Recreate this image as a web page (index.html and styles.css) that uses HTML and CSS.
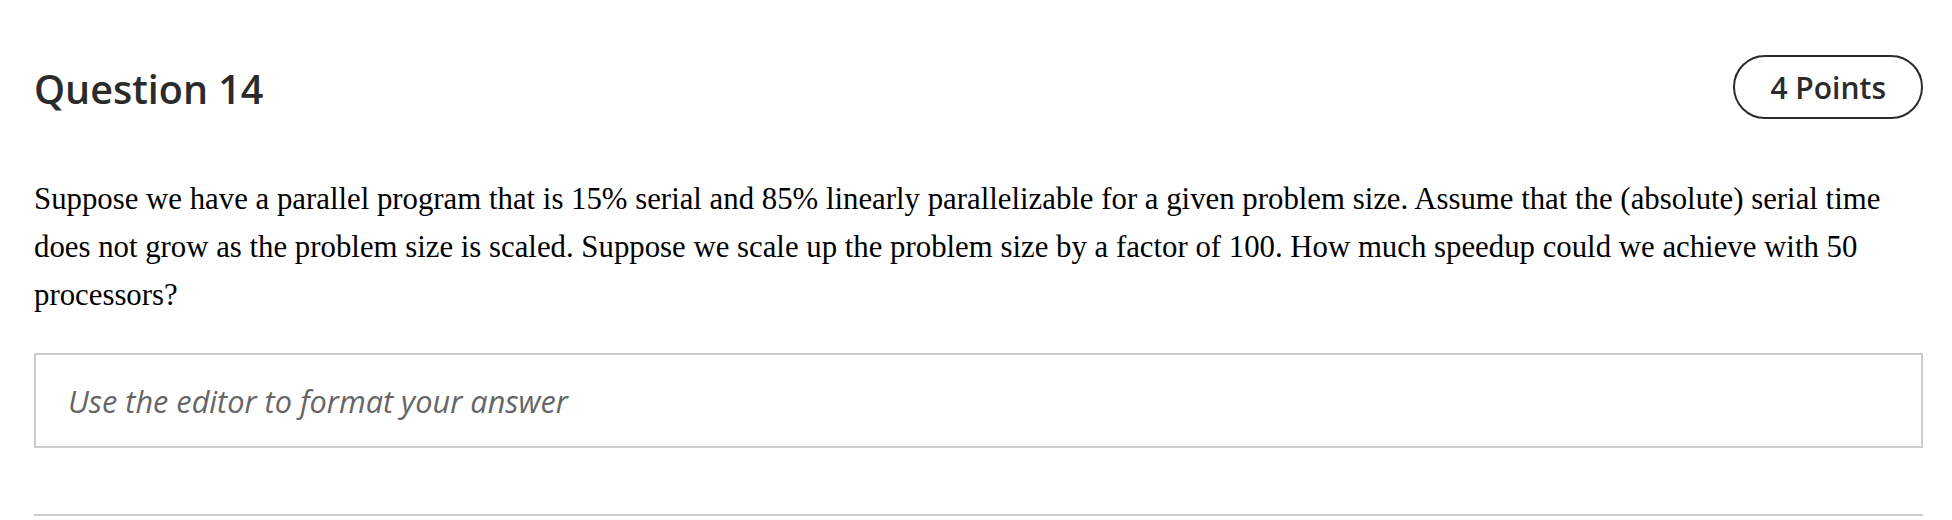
FILE: index.html
```html
<!DOCTYPE html>
<html lang="en">
<head>
<meta charset="utf-8">
<title>Question 14</title>
<link rel="stylesheet" href="styles.css">
</head>
<body>
<main class="question">
  <header class="question-header">
    <h2 class="question-title">Question 14</h2>
    <span class="points">4 Points</span>
  </header>
  <p class="question-text">Suppose we have a parallel program that is 15% serial and 85% linearly parallelizable for a given problem size. Assume that the (absolute) serial time does not grow as the problem size is scaled. Suppose we scale up the problem size by a factor of 100. How much speedup could we achieve with 50 processors?</p>
  <div class="answer-box">
    <span class="placeholder">Use the editor to format your answer</span>
  </div>
  <hr class="divider">
</main>
</body>
</html>
```

FILE: styles.css
```css
html, body {
  margin: 0;
  padding: 0;
  background: #ffffff;
}

.question {
  padding: 55px 29px 0 34px;
}

.question-header {
  display: flex;
  justify-content: space-between;
  align-items: center;
  height: 64px;
}

.question-title {
  margin: 0;
  font-family: "Open Sans", sans-serif;
  font-weight: 600;
  font-size: 39.5px;
  color: #2b2b2b;
  padding-top: 3px;
}

.points {
  box-sizing: border-box;
  height: 64px;
  padding: 0 35px;
  display: flex;
  align-items: center;
  border: 2px solid #2b2b2b;
  border-radius: 32px;
  font-family: "Open Sans", sans-serif;
  font-weight: 600;
  font-size: 30px;
  color: #2b2b2b;
}

.question-text {
  margin: 56px 0 0 0;
  font-family: "Liberation Serif", "Times New Roman", serif;
  font-size: 30.8px;
  line-height: 48px;
  color: #000000;
}

.answer-box {
  box-sizing: border-box;
  margin-top: 34px;
  height: 95px;
  border: 2px solid #cccccc;
  padding: 0 32px;
  display: flex;
  align-items: center;
}

.placeholder {
  font-family: "Open Sans", sans-serif;
  font-style: italic;
  font-size: 30.7px;
  color: #666666;
}

.divider {
  margin: 66px 0 0 0;
  border: none;
  height: 2px;
  background: #cccccc;
}
```
